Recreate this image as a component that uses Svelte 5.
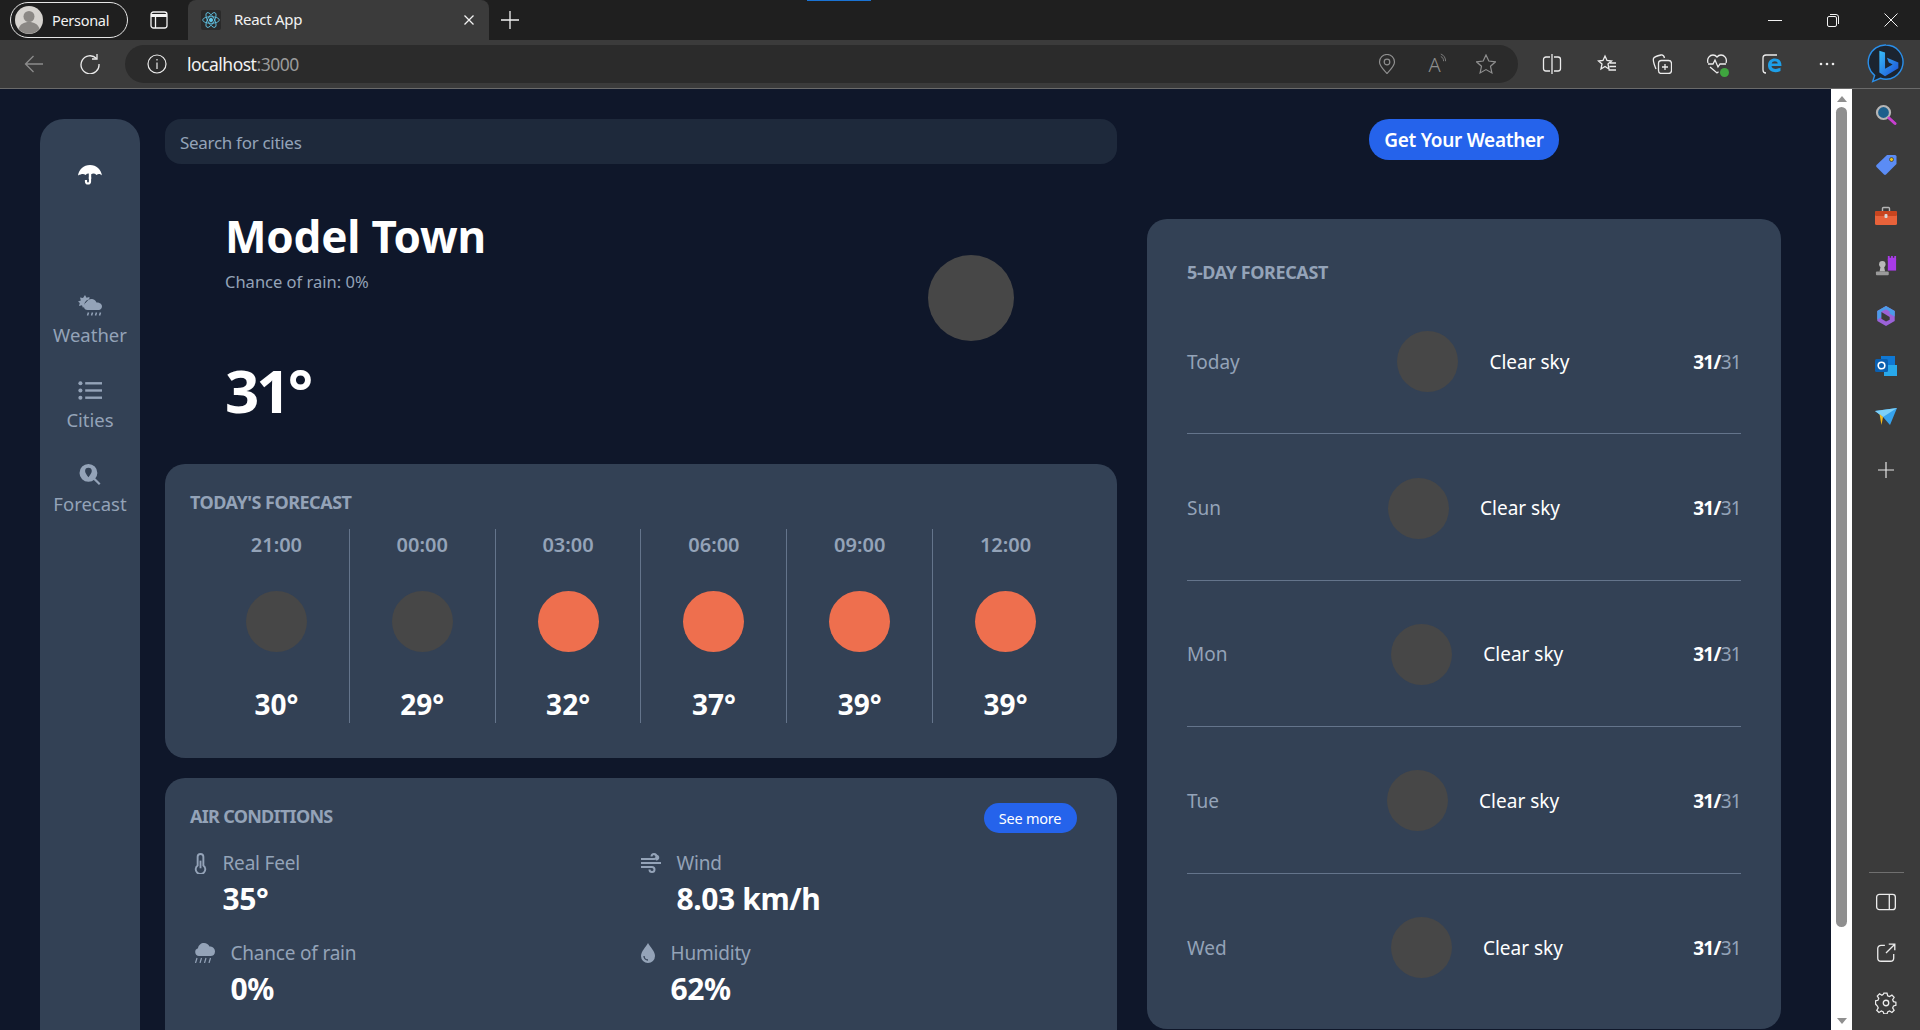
<script>
  const navItems = [
    { name: 'Weather', icon: 'weather' },
    { name: 'Cities', icon: 'list' },
    { name: 'Forecast', icon: 'search' }
  ];

  const hours = [
    { time: '21:00', temp: 30, day: false },
    { time: '00:00', temp: 29, day: false },
    { time: '03:00', temp: 32, day: true },
    { time: '06:00', temp: 37, day: true },
    { time: '09:00', temp: 39, day: true },
    { time: '12:00', temp: 39, day: true }
  ];

  const days = ['Today', 'Sun', 'Mon', 'Tue', 'Wed'];
</script>

<div class="window">
  <header class="tabstrip">
    <div class="profile">
      <svg class="avatar" viewBox="0 0 28 28">
        <circle cx="14" cy="14" r="14" fill="#d6d3cf" />
        <circle cx="14" cy="10.5" r="5.5" fill="#8b8885" />
        <path d="M3.5 23c1.5-5 5.5-7 10.500-7s9 2 10.500 7a14 14 0 0 1-21 0z" fill="#8b8885" />
      </svg>
      <span>Personal</span>
    </div>
    <svg class="tabs-btn" viewBox="0 0 18 18" fill="none" stroke="#f2f2f2" stroke-width="1.300">
      <rect x="1" y="1" width="16" height="16" rx="2.500" />
      <path d="M1 4.500h16" stroke-width="3" />
      <path d="M5.500 5v12" />
    </svg>
    <div class="tab">
      <span class="favicon">
        <svg viewBox="-12 -12 24 24" fill="none" stroke="#61c6e8" stroke-width="1">
          <circle r="2" fill="#61c6e8" />
          <ellipse rx="10" ry="4" />
          <ellipse rx="10" ry="4" transform="rotate(60)" />
          <ellipse rx="10" ry="4" transform="rotate(120)" />
        </svg>
      </span>
      <span class="tab-title">React App</span>
      <svg class="tab-close" viewBox="0 0 12 12" stroke="#f2f2f2" stroke-width="1.300"><path d="M1.500 1.500l9 9M10.500 1.500l-9 9" /></svg>
    </div>
    <svg class="new-tab" viewBox="0 0 18 18" stroke="#f2f2f2" stroke-width="1.300"><path d="M9 0v18M0 9h18" /></svg>
    <span class="spacer"></span>
    <div class="win-btn">
      <svg viewBox="0 0 14 14" stroke="#f2f2f2" fill="none"><path d="M0 7.500h14" /></svg>
    </div>
    <div class="win-btn">
      <svg viewBox="0 0 14 14" stroke="#f2f2f2" fill="none"><rect x="1.500" y="3.500" width="9" height="10" rx="1.500" /><path d="M4 1.500h6a2.500 2.500 0 0 1 2.500 2.500v7" /></svg>
    </div>
    <div class="win-btn">
      <svg viewBox="0 0 14 14" stroke="#f2f2f2" fill="none"><path d="M.5.5l13 13M13.500.5l-13 13" /></svg>
    </div>
    <span class="loading-bar"></span>
  </header>

  <div class="toolbar">
    <svg class="back" viewBox="0 0 20 20" fill="none" stroke="#8c8c8c" stroke-width="1.300"><path d="M19 10H1.500M9.500 2l-8 8 8 8" /></svg>
    <svg class="reload" viewBox="0 0 20 20" fill="none" stroke="#ececec" stroke-width="1.300"><path d="M16.500 4.500A9 9 0 1 0 19 10" /><path d="M17 0v5h-5" /></svg>
    <div class="address">
      <svg class="info" viewBox="0 0 20 20" fill="none" stroke="#ececec" stroke-width="1.200"><circle cx="10" cy="10" r="9" /><path d="M10 8.500V15M10 5v1.500" /></svg>
      <span class="url">localhost<span class="port">:3000</span></span>
      <span class="spacer"></span>
      <svg class="addr-icon" viewBox="0 0 20 20" fill="none" stroke="#8f8f8f" stroke-width="1.200"><path d="M10 19.500C6 15 2.500 12 2.500 8a7.500 7.500 0 0 1 15 0c0 4-3.500 7-7.500 11.500z" /><circle cx="10" cy="8" r="2.800" /></svg>
      <span class="read-aloud">A<svg viewBox="0 0 10 12" fill="none" stroke="#8f8f8f"><path d="M1 1c4 1.500 6 5 6 9M1 4c2 1 3.500 3 3.500 6" /></svg></span>
      <svg class="addr-icon" viewBox="0 0 20 20" fill="none" stroke="#8f8f8f" stroke-width="1.200"><path d="M10 1l2.800 6 6.700.8-5 4.500 1.400 6.600L10 15.600l-5.900 3.300 1.400-6.600-5-4.500L7.200 7z" /></svg>
    </div>
    <div class="tools">
      <svg viewBox="0 0 20 20" fill="none" stroke="#ececec" stroke-width="1.300"><path d="M8 3H4a2.500 2.500 0 0 0-2.500 2.500v9A2.500 2.500 0 0 0 4 17h4M12 3h4a2.500 2.500 0 0 1 2.500 2.500v9A2.500 2.500 0 0 1 16 17h-4M10 0v20" /></svg>
      <svg viewBox="0 0 20 20" fill="none" stroke="#ececec" stroke-width="1.300"><path d="M8 2l2 4.500 4.500.5-3.500 3 1 5-4-2.500L4 15l1-5-3.500-3L6 6.500zM13 9h6M12.500 12.500H19M11.500 16H19" /></svg>
      <svg viewBox="0 0 20 20" fill="none" stroke="#ececec" stroke-width="1.300"><rect x="6.500" y="6.500" width="13" height="13" rx="3" /><path d="M13 10v6M10 13h6M4 15C1.500 9 1 6 1.500 4.500S4 2 9 1c2-.3 3 .5 3.500 3" /></svg>
      <span class="health">
        <svg viewBox="0 0 20 20" fill="none" stroke="#ececec" stroke-width="1.300"><path d="M1 9C-.5 4 3 1 6 1c2 0 3.200 1 4 2 .8-1 2-2 4-2 3 0 6.500 3 5 8M1 10h5l2-4 3 7 2-3h6M3 13l7 6 1.500-1.200" /></svg>
        <i class="check"></i>
      </span>
      <svg viewBox="0 0 20 20" fill="none"><path d="M15 1H4a3 3 0 0 0-3 3v12a3 3 0 0 0 3 3" stroke="#ececec" stroke-width="1.300" /><path d="M6 11.500C6 7 9 4.500 13 4.500s6.500 2.500 6.500 7.500H9.500c.3 3 5 4 9 1.500v3.500c-5 2.500-12.500 1-12.500-5.500zM9.700 9.500h6c0-3-5.500-3-6 0z" fill="#1e9fe8" /></svg>
      <svg class="dots" viewBox="0 0 20 20" fill="#ececec"><circle cx="4" cy="10" r="1.300" /><circle cx="10" cy="10" r="1.300" /><circle cx="16" cy="10" r="1.300" /></svg>
    </div>
    <svg class="bing" viewBox="0 0 40 44" fill="none">
      <defs>
        <linearGradient id="bing-b" x1="0" y1="0" x2="1" y2="1">
          <stop offset="0" stop-color="#37bdf8" />
          <stop offset="1" stop-color="#1c4fd8" />
        </linearGradient>
      </defs>
      <path d="M20 2a18 18 0 1 1-6 35l-8 3.500 2-6.500A18 18 0 0 1 20 2z" stroke="#2a8ee8" stroke-width="1.500" fill="#1b2430" />
      <path d="M13 8l6 2v17l8-4.500-4-2-2-5 12 5v6L19 35l-6-4z" fill="url(#bing-b)" />
    </svg>
  </div>

  <div class="body-row">
    <div class="page">
      <aside class="sidebar">
        <svg class="umbrella" viewBox="0 0 24 20" fill="#fff">
          <path d="M12 0c6.500 0 11 4.500 12 10.500-1.500-1.500-3.500-2-5.500-.5-1.500-1.500-3.500-1.800-5.500-.8-2-1-4-.7-5.500.8C5.500 8.500 3.500 9 0 10.500 1 4.500 5.500 0 12 0z" />
          <rect x="10.800" y="8" width="2.400" height="6" />
          <path d="M12 12v4.500a2 2 0 0 1-4 0v-1.500" fill="none" stroke="#fff" stroke-width="2.200" />
        </svg>
        <nav class="nav">
          {#each navItems as item}
            <div class="nav-item">
              {#if item.icon === 'weather'}
                <svg viewBox="0 0 24 21" fill="#94a3b8">
                  <path d="M7 0l1.500 2.800L11.500 2l-.3 2.500C8 5 6 7.500 6.500 11L5 13l-1-2.800-3 .8.800-3L0 6.500l2.800-1L2 2.500l3 .6z" />
                  <path d="M9 6.500a4 4 0 0 0-1.500 4.500L9 9a3 3 0 0 1 1.500-2z" />
                  <path d="M9.500 15a3.800 3.800 0 0 1-1-7.400C9.500 5 12 3.500 15 4.300c1.700.5 3 1.700 3.500 3.200 3-.2 5.500 1.500 5.500 3.900S22 15 19.500 15z" />
                  <path d="M10.500 17.500l-1 3M14.500 17.500l-1 3M18.500 17.500l-1 3M22.500 17.500l-1 3" stroke="#94a3b8" stroke-width="1.500" />
                </svg>
              {:else if item.icon === 'list'}
                <svg viewBox="0 0 20 16" fill="#94a3b8">
                  <circle cx="2" cy="2" r="1.700" /><circle cx="2" cy="8" r="1.700" /><circle cx="2" cy="14" r="1.700" />
                  <rect x="6" y="1" width="14" height="2" /><rect x="6" y="7" width="14" height="2" /><rect x="6" y="13" width="14" height="2" />
                </svg>
              {:else}
                <svg viewBox="0 0 20 20" fill="#94a3b8">
                  <path fill-rule="evenodd" d="M8.500 0a8.500 8.500 0 1 1 0 17 8.500 8.500 0 0 1 0-17zm0 3.500a3.200 3.200 0 0 0-3.200 3.200c0 2 1.800 3.800 3.200 6 1.400-2.200 3.200-4 3.200-6a3.200 3.200 0 0 0-3.200-3.200z" />
                  <path d="M14 12.500l6 6-1.500 1.500-6-6z" />
                </svg>
              {/if}
              <span>{item.name}</span>
            </div>
          {/each}
        </nav>
      </aside>

      <main class="main">
        <div class="search">Search for cities</div>

        <section class="hero">
          <div class="hero-text">
            <h1>Model Town</h1>
            <p>Chance of rain: 0%</p>
            <div class="hero-temp">31°</div>
          </div>
          <div class="hero-icon"></div>
        </section>

        <section class="card today">
          <h2>TODAY'S FORECAST</h2>
          <div class="hours">
            {#each hours as h}
              <div class="hour">
                <span class="hour-time">{h.time}</span>
                <span class="dot" class:sun={h.day}></span>
                <span class="hour-temp">{h.temp}°</span>
              </div>
            {/each}
          </div>
        </section>

        <section class="card air">
          <div class="air-head">
            <h2>AIR CONDITIONS</h2>
            <button class="more">See more</button>
          </div>
          <div class="air-grid">
            <div class="cond">
              <svg class="i-thermo" viewBox="0 0 13 22" fill="none" stroke="#94a3b8" stroke-width="2">
                <path d="M3.500 13V4a3 3 0 0 1 6 0v9a5 5 0 1 1-6 0z" />
                <path d="M6.500 8v8" />
              </svg>
              <div>
                <div class="cond-label">Real Feel</div>
                <div class="cond-value">35°</div>
              </div>
            </div>
            <div class="cond">
              <svg class="i-wind" viewBox="0 0 20 20" fill="none" stroke="#94a3b8" stroke-width="2">
                <path d="M0 6h13a2.500 2.500 0 1 0-2.500-2.500M0 10h20M0 14h11a2.500 2.500 0 1 1-2.500 2.500M15 6.500a2 2 0 1 0-1-3.500" />
              </svg>
              <div>
                <div class="cond-label">Wind</div>
                <div class="cond-value">8.03 km/h</div>
              </div>
            </div>
            <div class="cond">
              <svg class="i-rain" viewBox="0 0 21 20" fill="#94a3b8">
                <path d="M5 13a4 4 0 0 1-1-7.800C4.500 2 7 0 10 0c2.500 0 4.500 1.500 5.500 3.500 3-.3 5.500 2 5.500 5s-2 4.500-4.500 4.500z" />
                <path d="M3 15l-1.500 5M7.500 15L6 20M12 15l-1.500 5M16.500 15L15 20" stroke="#94a3b8" stroke-width="1.200" />
              </svg>
              <div>
                <div class="cond-label">Chance of rain</div>
                <div class="cond-value">0%</div>
              </div>
            </div>
            <div class="cond">
              <svg class="i-drop" viewBox="0 0 14 20">
                <path d="M7 0c2 4 7 8 7 13a7 7 0 0 1-14 0C0 8 5 4 7 0z" fill="#94a3b8" />
                <path d="M3 13a4 4 0 0 0 4 4" stroke="#334155" fill="none" stroke-width="1.300" />
              </svg>
              <div>
                <div class="cond-label">Humidity</div>
                <div class="cond-value">62%</div>
              </div>
            </div>
          </div>
        </section>
      </main>

      <section class="side">
        <button class="get">Get Your Weather</button>
        <div class="card week">
          <h2>5-DAY FORECAST</h2>
          {#each days as d, i}
            <div class="day" class:last={i === days.length - 1}>
              <span class="day-name">{d}</span>
              <div class="day-mid">
                <span class="dot"></span>
                <span class="day-desc">Clear sky</span>
              </div>
              <span class="day-temp"><b>31/</b>31</span>
            </div>
          {/each}
        </div>
      </section>
    </div>

    <div class="scrollbar">
      <span class="arrow up"></span>
      <span class="thumb"></span>
      <span class="arrow down"></span>
    </div>

    <aside class="edge">
      <svg viewBox="0 0 22 22" fill="none">
        <circle cx="8.500" cy="8.500" r="6.500" fill="#1c5f8c" stroke="#b5b5b5" stroke-width="2.200" />
        <path d="M14 14l6 5.500" stroke="#c83fd0" stroke-width="3" stroke-linecap="round" />
      </svg>
      <svg viewBox="0 0 22 22">
        <path d="M12 1h8a1.500 1.500 0 0 1 1.500 1.500V10L11 20.500a1.500 1.500 0 0 1-2 0L1.500 13a1.500 1.500 0 0 1 0-2z" fill="#5b8cf5" />
        <circle cx="16.500" cy="5.500" r="2" fill="#e8c11c" stroke="#333" stroke-width=".7" />
      </svg>
      <svg viewBox="0 0 22 22">
        <path d="M7.500 6V3.500a1 1 0 0 1 1-1h5a1 1 0 0 1 1 1V6" fill="none" stroke="#b5b5b5" stroke-width="1.400" />
        <rect x="0" y="6" width="22" height="14" rx="1.500" fill="#e8623a" />
        <rect x="0" y="6" width="22" height="5" rx="1.500" fill="#c8451f" />
        <rect x="9.500" y="9" width="3" height="4" rx="1" fill="#d8d8d8" />
      </svg>
      <svg viewBox="0 0 24 24">
        <rect x="14" y="4" width="9" height="13" fill="#a83be8" />
        <path d="M14 1h2v2h1.500V1h2v2H21V1h2v5h-9z" fill="#a83be8" />
        <circle cx="8" cy="10" r="3.500" fill="#b8b8b8" />
        <path d="M6 13h4l1 5H5z" fill="#b8b8b8" />
        <rect x="1" y="18" width="14" height="4" rx="1" fill="#9a9a9a" />
      </svg>
      <svg viewBox="0 0 22 24">
        <path d="M11 1l9.500 5.500v11L11 23l-9.500-5.500v-11z" fill="#9b62d8" />
        <path d="M11 1l9.500 5.500v6L15 9.500V7l-4-2.500L6 7v6l-4.500 3V6.500z" fill="#4a9ce8" />
        <path d="M6 7.500l5 3 4 2.500v3l-4 2-5-3z" fill="#3b3b3b" />
      </svg>
      <svg viewBox="0 0 22 22">
        <rect x="6" y="1" width="14" height="10" fill="#0f78d4" />
        <rect x="9" y="10" width="13" height="11" fill="#28a8ea" />
        <rect x="0" y="4" width="13" height="13" rx="1.500" fill="#0a5fb0" />
        <circle cx="6.500" cy="10.500" r="3.300" fill="none" stroke="#fff" stroke-width="1.600" />
      </svg>
      <svg viewBox="0 0 22 18">
        <path d="M0 3L22 0 15 17 8 9z" fill="#36a3ee" />
        <path d="M0 3l8 6 14-9z" fill="#7dd0f8" />
        <path d="M8 9l-1.500 8L4.500 6z" fill="#f4b91c" />
      </svg>
      <svg class="edge-plus" viewBox="0 0 16 16" stroke="#e4e4e4" stroke-width="1.200"><path d="M8 0v16M0 8h16" /></svg>
      <span class="spacer"></span>
      <span class="edge-line"></span>
      <svg viewBox="0 0 20 20" fill="none" stroke="#ececec" stroke-width="1.200"><rect x="1.500" y="3" width="17" height="14" rx="2.500" /><path d="M13 3v14" /></svg>
      <svg viewBox="0 0 20 20" fill="none" stroke="#ececec" stroke-width="1.200"><path d="M9 3H5.500a3 3 0 0 0-3 3v8.500a3 3 0 0 0 3 3H14a3 3 0 0 0 3-3V11M10 10l8-8M12.500 2H18v5.500" /></svg>
      <svg viewBox="0 0 20 20" fill="none" stroke="#ececec" stroke-width="1.200">
        <path d="M8.500 1h3l.6 2.600 1.800.8 2.300-1.400 2.100 2.100-1.400 2.300.8 1.800 2.300.6v3l-2.300.6-.8 1.800 1.400 2.300-2.100 2.100-2.300-1.400-1.800.8-.6 2.000h-3l-.6-2-1.800-.8-2.300 1.400-2.100-2.100 1.400-2.300-.8-1.800L.5 11.500v-3l2.300-.6.8-1.800L2.200 3.800l2.100-2.100 2.300 1.400 1.300-.8z" transform="scale(.95)" />
        <circle cx="10" cy="10" r="2.500" />
      </svg>
    </aside>
  </div>
</div>

<style>
  :global(body) {
    margin: 0;
    overflow: hidden;
    background: #0f172a;
  }

  .window {
    height: 1030px;
    display: flex;
    flex-direction: column;
    font-family: "Noto Sans", "Open Sans", sans-serif;
    overflow: hidden;
  }

  .spacer {
    flex: 1;
  }

  /* browser chrome */
  .tabstrip {
    height: 40px;
    flex-shrink: 0;
    position: relative;
    display: flex;
    align-items: center;
    background: #1f1f1f;
    color: #f2f2f2;
    font-size: 14px;
  }

  .loading-bar {
    position: absolute;
    top: 0;
    left: 807px;
    width: 64px;
    height: 1px;
    background: #1a73d4;
  }

  .profile {
    width: 116px;
    height: 34px;
    margin-left: 10px;
    display: flex;
    align-items: center;
    gap: 9px;
    border: 1px solid #e6e6e6;
    border-radius: 18px;
    font-size: 14.500px;
    letter-spacing: -0.3px;
  }

  .avatar {
    width: 28px;
    height: 28px;
    margin-left: 4px;
  }

  .tabs-btn {
    width: 18px;
    height: 18px;
    margin-left: 22px;
  }

  .tab {
    width: 301px;
    height: 40px;
    margin-left: 20px;
    display: flex;
    align-items: center;
    background: #3b3b3b;
    border-radius: 8px 8px 0 0;
  }

  .favicon {
    width: 20px;
    height: 20px;
    margin-left: 13px;
    background: #2a2a2a;
    border-radius: 2px;
  }

  .favicon svg {
    display: block;
    width: 20px;
    height: 20px;
  }

  .tab-title {
    margin: -2px 0 0 13px;
    flex: 1;
    font-size: 15px;
    letter-spacing: -0.3px;
  }

  .tab-close {
    width: 12px;
    height: 12px;
    margin-right: 14px;
  }

  .new-tab {
    width: 18px;
    height: 18px;
    margin-left: 12px;
  }

  .win-btn {
    width: 58px;
    display: flex;
    justify-content: center;
  }

  .win-btn svg {
    width: 14px;
    height: 14px;
  }

  .toolbar {
    height: 48px;
    flex-shrink: 0;
    display: flex;
    align-items: center;
    background: #3b3b3b;
    border-bottom: 1px solid #6a6a6a;
  }

  .back {
    width: 20px;
    height: 20px;
    margin-left: 24px;
  }

  .reload {
    width: 20px;
    height: 20px;
    margin-left: 36px;
  }

  .address {
    width: 1393px;
    height: 38px;
    margin-left: 25px;
    display: flex;
    align-items: center;
    background: #2b2b2b;
    border-radius: 19px;
    color: #f2f2f2;
    font-size: 17.500px;
    letter-spacing: -0.5px;
  }

  .info {
    width: 20px;
    height: 20px;
    margin-left: 22px;
  }

  .url {
    margin-left: 20px;
  }

  .port {
    color: #9a9a9a;
  }

  .addr-icon {
    width: 20px;
    height: 20px;
    margin-right: 21px;
  }

  .read-aloud {
    width: 20px;
    margin: 0 27.500px 0 11px;
    display: flex;
    align-items: flex-start;
    color: #8f8f8f;
    font-size: 20px;
    font-weight: 300;
  }

  .read-aloud svg {
    width: 8px;
    height: 10px;
    margin-top: 2px;
  }

  .address .addr-icon:last-child {
    margin-right: 22px;
  }

  .tools {
    display: flex;
    align-items: center;
    gap: 35px;
    margin-left: 24px;
  }

  .tools > svg,
  .health svg {
    display: block;
    width: 20px;
    height: 20px;
  }

  .health {
    position: relative;
  }

  .check {
    position: absolute;
    right: -2px;
    bottom: -3px;
    width: 9px;
    height: 9px;
    background: #3fa63f;
    border-radius: 50%;
  }

  .bing {
    width: 38px;
    height: 42px;
    margin-left: 30px;
  }

  .body-row {
    flex: 1;
    min-height: 0;
    display: flex;
  }

  .scrollbar {
    width: 21px;
    flex-shrink: 0;
    display: flex;
    flex-direction: column;
    align-items: center;
    background: #fff;
  }

  .thumb {
    width: 11px;
    height: 820px;
    margin: 5px 0 auto;
    background: #8f8f8f;
    border-radius: 6px;
  }

  .arrow {
    width: 0;
    height: 0;
    border-left: 5px solid transparent;
    border-right: 5px solid transparent;
  }

  .arrow.up {
    margin-top: 7px;
    border-bottom: 6px solid #8f8f8f;
  }

  .arrow.down {
    margin-bottom: 6px;
    border-top: 6px solid #8f8f8f;
  }

  .edge {
    width: 68px;
    flex-shrink: 0;
    box-sizing: border-box;
    padding: 15px 0 16px;
    display: flex;
    flex-direction: column;
    align-items: center;
    gap: 28.300px;
    background: #3b3b3b;
  }

  .edge svg {
    width: 22px;
    height: 22px;
    flex-shrink: 0;
  }

  .edge .edge-plus {
    width: 16px;
    height: 16px;
    margin-top: 6px;
  }

  .edge-line {
    width: 35px;
    height: 1px;
    background: #6f6f6f;
    margin-bottom: -10px;
  }

  /* app */
  .page {
    flex: 1;
    min-width: 0;
    box-sizing: border-box;
    padding: 30px 0 0 40px;
    display: grid;
    grid-template-columns: 100px 952px 633px;
    column-gap: 25px;
    background: #0f172a;
    overflow: hidden;
  }

  .sidebar {
    background: #334155;
    border-radius: 24px 24px 0 0;
    display: flex;
    flex-direction: column;
    align-items: center;
    height: 930px;
  }

  .umbrella {
    width: 24px;
    height: 20px;
    margin-top: 46px;
  }

  .nav {
    margin-top: 110px;
    display: flex;
    flex-direction: column;
    gap: 32.500px;
    align-items: center;
  }

  .nav-item {
    display: flex;
    flex-direction: column;
    align-items: center;
    gap: 6px;
    color: #94a3b8;
    font-size: 18.500px;
  }

  .nav-item svg {
    width: 24px;
    height: 21px;
  }

  .main {
    display: flex;
    flex-direction: column;
    gap: 20px;
  }

  .search {
    height: 45px;
    box-sizing: border-box;
    padding: 2px 0 0 15px;
    display: flex;
    align-items: center;
    background: #1e293b;
    border-radius: 16px;
    color: #94a3b8;
    font-size: 17px;
    letter-spacing: -0.3px;
  }

  .hero {
    height: 280px;
    margin-top: -20px;
    padding: 0 103px 0 60px;
    display: flex;
    justify-content: space-between;
    color: #fff;
  }

  .hero-text h1 {
    margin: 42px 0 0;
    font-size: 44px;
    line-height: 60px;
    font-weight: 700;
    letter-spacing: -0.200px;
  }

  .hero-text p {
    margin: 1px 0 0;
    color: #94a3b8;
    font-size: 16.500px;
    line-height: 30px;
  }

  .hero-temp {
    margin-top: 53px;
    font-size: 60px;
    line-height: 80px;
    font-weight: 700;
    letter-spacing: -3px;
  }

  .hero-icon {
    width: 86px;
    height: 86px;
    margin-top: 91px;
    background: #474747;
    border-radius: 50%;
  }

  .card {
    background: #334155;
    border-radius: 20px;
    box-sizing: border-box;
  }

  .card h2 {
    margin: 0;
    color: #94a3b8;
    font-size: 18px;
    font-weight: 700;
    letter-spacing: -0.500px;
  }

  .today {
    height: 294px;
    padding: 26px 0 0 25px;
  }

  .hours {
    width: 874px;
    margin: 15px 0 0 14px;
    display: flex;
  }

  .hour {
    flex: 1;
    height: 194px;
    display: flex;
    flex-direction: column;
    align-items: center;
    border-right: 1px solid #64748b;
  }

  .hour:last-child {
    border-right: 0;
  }

  .hour-time {
    margin-top: 2px;
    color: #94a3b8;
    font-size: 20px;
    font-weight: 600;
    line-height: 28px;
  }

  .dot {
    display: block;
    width: 61px;
    height: 61px;
    flex-shrink: 0;
    background: #474747;
    border-radius: 50%;
  }

  .hour .dot {
    margin-top: 32px;
  }

  .dot.sun {
    background: #ee6f4e;
  }

  .hour-temp {
    margin-top: 32px;
    color: #fff;
    font-size: 28px;
    line-height: 40px;
    font-weight: 700;
  }

  .air {
    height: 290px;
    padding: 26px 40.500px 0 25px;
  }

  .air h2 {
    letter-spacing: -0.700px;
  }

  .air-head {
    display: flex;
    justify-content: space-between;
    align-items: flex-start;
    margin-bottom: -1px;
  }

  .more {
    width: 93px;
    height: 30px;
    margin-top: -1px;
    border: 0;
    padding: 0;
    background: #2563eb;
    border-radius: 15px;
    color: #fff;
    font-family: inherit;
    font-size: 14.500px;
    letter-spacing: -0.2px;
  }

  .air-grid {
    display: grid;
    grid-template-columns: 447px 1fr;
    row-gap: 19px;
    margin-top: 17px;
  }

  .cond {
    display: flex;
    align-items: flex-start;
    gap: 15.500px;
    padding-left: 4px;
  }

  .cond svg {
    margin-top: 4px;
  }

  .i-thermo { width: 13px; height: 21px; }
  .i-wind { width: 20px; height: 20px; }
  .i-rain { width: 21px; height: 20px; }
  .i-drop { width: 14px; height: 20px; }

  .cond-label {
    color: #94a3b8;
    font-size: 19px;
    line-height: 28px;
    letter-spacing: -0.2px;
  }

  .cond-value {
    color: #fff;
    font-size: 30px;
    line-height: 43px;
    font-weight: 700;
    letter-spacing: -0.400px;
  }

  .side {
    margin-left: 5px;
    margin-right: -6px;
    display: flex;
    flex-direction: column;
    align-items: center;
  }

  .get {
    width: 190px;
    height: 41px;
    border: 0;
    padding: 1px 0 0;
    background: #2563eb;
    border-radius: 20px;
    color: #fff;
    font-family: inherit;
    font-size: 19px;
    font-weight: 600;
    letter-spacing: -0.3px;
    flex-shrink: 0;
  }

  .week {
    width: 634px;
    height: 810px;
    margin-top: 59px;
    padding: 41px 40px 0;
  }

  .week h2 {
    line-height: 24px;
    margin-bottom: 4px;
    letter-spacing: -0.400px;
  }

  .day {
    height: 146.400px;
    box-sizing: border-box;
    padding-top: 2px;
    display: flex;
    justify-content: space-between;
    align-items: center;
    border-bottom: 1px solid #64748b;
    font-size: 19px;
    color: #94a3b8;
  }

  .day.last {
    border-bottom: 0;
  }

  .day-mid {
    display: flex;
    align-items: center;
    gap: 31px;
    margin-left: 34px;
    color: #fff;
  }

  .day-temp {
    letter-spacing: -0.700px;
  }

  .day-temp b {
    color: #fff;
    font-weight: 700;
  }
</style>
